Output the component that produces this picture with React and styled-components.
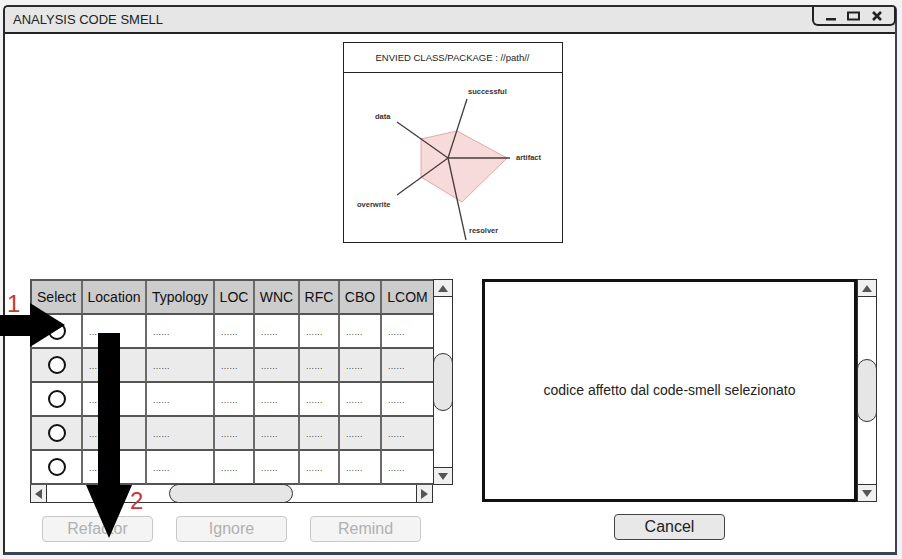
import React from 'react';
import styled, { createGlobalStyle } from 'styled-components';

const GlobalStyle = createGlobalStyle`
    html, body {
        margin: 0;
        padding: 0;
        background: #f3f3f3;
        font-family: "Liberation Sans", Arial, sans-serif;
    }
    * { box-sizing: border-box; }
`;

// 화면 전체
const Page = styled.div`
    position : relative;
    width    : 902px;
    height   : 559px;
    padding  : 5px 5px 4px 3px;
`;

// 창
const Window = styled.div`
    width          : 894px;
    height         : 550px;
    display        : flex;
    flex-direction : column;
    background     : #fff;
    border         : 2px solid #2a2a2a;
    border-right-color  : #3b4352;
    border-bottom-color : #3b4352;
    border-bottom-width : 3px;
    border-radius  : 5px 5px 0 0;
`;

const TitleBar = styled.div`
    height        : 27px;
    display       : flex;
    align-items   : center;
    justify-content: space-between;
    background    : #e6e6e6;
    border-bottom : 2px solid #222;
    border-radius : 4px 4px 0 0;
    padding-left  : 8px;
    padding-bottom: 1px;
    font-size     : 13px;
    color         : #222;
`;

const Controls = styled.div`
    align-self    : flex-start;
    width         : 84px;
    height        : 19px;
    margin-right  : -1px;
    display       : flex;
    align-items   : center;
    justify-content: space-around;
    padding       : 0 6px;
    border        : 2px solid #222;
    border-top    : none;
    border-radius : 0 0 6px 6px;
`;

const Body = styled.div`
    flex           : 1;
    display        : flex;
    flex-direction : column;
    align-items    : center;
    padding-top    : 8px;
`;

// 차트 박스
const ChartBox = styled.div`
    width      : 220px;
    height     : 201px;
    border     : 1px solid #222;
    display    : flex;
    flex-direction: column;
    margin-left: 5px;
`;

const ChartHeader = styled.div`
    height        : 30px;
    border-bottom : 1px solid #222;
    display       : flex;
    align-items   : center;
    justify-content: center;
    font-size     : 9.5px;
    color         : #222;
`;

const Lower = styled.div`
    align-self  : stretch;
    display     : flex;
    gap         : 29px;
    margin-top  : 36px;
    padding-left: 25px;
`;

const LeftCol = styled.div`
    width          : 423px;
    display        : flex;
    flex-direction : column;
`;

const TableFrame = styled.div`
    display : flex;
`;

const Grid = styled.div`
    width     : 403px;
    display   : grid;
    grid-template-columns : 51px 64px 68px 40px 45px 40px 42px 53px;
    grid-template-rows    : 34px repeat(5, 34px);
    border-top  : 2px solid #555;
    border-left : 2px solid #555;
`;

const Cell = styled.div`
    display       : flex;
    align-items   : center;
    justify-content: ${p => (p.$center ? 'center' : 'flex-start')};
    padding-left  : ${p => (p.$center ? '0' : '6px')};
    border-right  : 2px solid #6a6a6a;
    border-bottom : 2px solid #555;
    background    : ${p => (p.$head ? '#cccccc' : p.$alt ? '#ebebeb' : '#fff')};
    font-size     : ${p => (p.$head ? '14px' : '9px')};
    color         : ${p => (p.$head ? '#111' : '#444')};
    letter-spacing: ${p => (p.$head ? '0' : '0.3px')};
`;

const Dots = styled.span`
    margin-top : 2px;
`;

const Radio = styled.span`
    width         : 18px;
    height        : 18px;
    border        : 2px solid #111;
    border-radius : 50%;
    background    : #fff;
`;

// 스크롤바
const VScroll = styled.div`
    width          : 20px;
    height         : ${p => p.$h}px;
    display        : flex;
    flex-direction : column;
    justify-content: space-between;
    border         : 1px solid #333;
    background     : #fff;
`;

const ArrowBtn = styled.div`
    height     : 17px;
    width      : ${p => (p.$w ? p.$w + 'px' : 'auto')};
    display    : flex;
    align-items: center;
    justify-content: center;
    background : #f0f0f0;
    border-${p => p.$side}: 1px solid #333;
`;

const VThumb = styled.div`
    height        : ${p => p.$h}px;
    margin        : 0 -1px;
    background    : #e6e6e6;
    border        : 1px solid #333;
    border-radius : 10px;
`;

const HScroll = styled.div`
    width       : 403px;
    height      : 18px;
    display     : flex;
    align-items : stretch;
    border      : 1px solid #333;
    border-top  : none;
    background  : #fff;
`;

const HTrack = styled.div`
    flex        : 1;
    display     : flex;
    align-items : center;
    padding-left: 122px;
`;

const HThumb = styled.div`
    width         : 124px;
    height        : 19px;
    margin-top    : -1px;
    background    : #e6e6e6;
    border        : 1px solid #333;
    border-radius : 10px;
`;

const ButtonRow = styled.div`
    display     : flex;
    gap         : 23px;
    margin-top  : 13px;
    padding-left: 12px;
`;

const Button = styled.div`
    width          : 111px;
    height         : 26px;
    display        : flex;
    align-items    : center;
    justify-content: center;
    font-size      : 16px;
    border-radius  : 4px;
    border         : 1px solid ${p => (p.$disabled ? '#c8c8c8' : '#444')};
    background     : ${p => (p.$disabled ? '#f4f4f4' : '#e8e8e8')};
    color          : ${p => (p.$disabled ? '#b0b0b0' : '#222')};
`;

const RightCol = styled.div`
    width          : 395px;
    display        : flex;
    flex-direction : column;
`;

const CodeFrame = styled.div`
    display : flex;
`;

const CodeArea = styled.div`
    width          : 375px;
    height         : 223px;
    border         : 3px solid #111;
    display        : flex;
    align-items    : center;
    justify-content: center;
    font-size      : 14px;
    color          : #222;
    padding-bottom : 2px;
`;

const CancelRow = styled.div`
    width          : 375px;
    display        : flex;
    justify-content: center;
    margin-top     : 12px;
`;

// 주석 화살표
const Overlay = styled.svg`
    position       : absolute;
    left           : 0;
    top            : 0;
    pointer-events : none;
`;

const Mark = styled.span`
    position   : absolute;
    left       : ${p => p.$x}px;
    top        : ${p => p.$y}px;
    font-size  : 24px;
    color      : #c8363a;
    line-height: 1;
`;

const heads = ['Select', 'Location', 'Typology', 'LOC', 'WNC', 'RFC', 'CBO', 'LCOM'];
const rows = [0, 1, 2, 3, 4];

const Tri = ({ dir }) => {
    const pts = {
        up: '0,7 5,0 10,7',
        down: '0,0 10,0 5,7',
        left: '7,0 7,10 0,5',
        right: '0,0 0,10 7,5',
    }[dir];
    const vertical = dir === 'up' || dir === 'down';
    return (
        <svg width={vertical ? 10 : 7} height={vertical ? 7 : 10}>
            <polygon points={pts} fill="#555" />
        </svg>
    );
};

const Radar = () => (
    <svg width="218" height="169" viewBox="344 73 218 169">
        <polygon points="457,131 507,158 462,202 421,177 421,139"
                 fill="#f7dada" stroke="#e4a8a8" strokeWidth="1" />
        <g stroke="#4a3a3a" strokeWidth="1.3">
            <line x1="448" y1="158" x2="467" y2="99" />
            <line x1="448" y1="158" x2="397" y2="122" />
            <line x1="448" y1="158" x2="510" y2="158" />
            <line x1="448" y1="158" x2="397" y2="195" />
            <line x1="448" y1="158" x2="466" y2="240" />
        </g>
        <g fontFamily="Liberation Sans, Arial, sans-serif" fontSize="7.5" fontWeight="bold" fill="#333">
            <text x="468" y="94">successful</text>
            <text x="375" y="119">data</text>
            <text x="516" y="160">artifact</text>
            <text x="357" y="207">overwrite</text>
            <text x="469" y="233">resolver</text>
        </g>
    </svg>
);

const App = () => {
    return (
        <Page>
            <GlobalStyle />
            <Window>
                <TitleBar>
                    ANALYSIS CODE SMELL
                    <Controls>
                        <svg width="12" height="10" viewBox="0 0 12 10"><rect x="1" y="7" width="10" height="2.5" fill="#222" /></svg>
                        <svg width="13" height="10" viewBox="0 0 13 10"><rect x="1" y="1.5" width="11" height="7" fill="none" stroke="#222" strokeWidth="2" /></svg>
                        <svg width="12" height="10" viewBox="0 0 12 10"><path d="M2 1 L10 9 M10 1 L2 9" stroke="#222" strokeWidth="2.6" /></svg>
                    </Controls>
                </TitleBar>
                <Body>
                    <ChartBox>
                        <ChartHeader>ENVIED CLASS/PACKAGE : //path//</ChartHeader>
                        <Radar />
                    </ChartBox>
                    <Lower>
                        <LeftCol>
                            <TableFrame>
                                <Grid>
                                    {heads.map(h => <Cell key={h} $head $center>{h}</Cell>)}
                                    {rows.map(r => (
                                        <React.Fragment key={r}>
                                            <Cell $center $alt={r % 2 === 1}><Radio /></Cell>
                                            {heads.slice(1).map(h => (
                                                <Cell key={h} $alt={r % 2 === 1}><Dots>......</Dots></Cell>
                                            ))}
                                        </React.Fragment>
                                    ))}
                                </Grid>
                                <VScroll $h={206}>
                                    <ArrowBtn $side="bottom"><Tri dir="up" /></ArrowBtn>
                                    <VThumb $h={58} />
                                    <ArrowBtn $side="top"><Tri dir="down" /></ArrowBtn>
                                </VScroll>
                            </TableFrame>
                            <HScroll>
                                <ArrowBtn $side="right" $w={16}><Tri dir="left" /></ArrowBtn>
                                <HTrack><HThumb /></HTrack>
                                <ArrowBtn $side="left" $w={16}><Tri dir="right" /></ArrowBtn>
                            </HScroll>
                            <ButtonRow>
                                <Button $disabled>Refactor</Button>
                                <Button $disabled>Ignore</Button>
                                <Button $disabled>Remind</Button>
                            </ButtonRow>
                        </LeftCol>
                        <RightCol>
                            <CodeFrame>
                                <CodeArea>codice affetto dal code-smell selezionato</CodeArea>
                                <VScroll $h={223}>
                                    <ArrowBtn $side="bottom"><Tri dir="up" /></ArrowBtn>
                                    <VThumb $h={63} />
                                    <ArrowBtn $side="top"><Tri dir="down" /></ArrowBtn>
                                </VScroll>
                            </CodeFrame>
                            <CancelRow>
                                <Button>Cancel</Button>
                            </CancelRow>
                        </RightCol>
                    </Lower>
                </Body>
            </Window>

            <Overlay width="902" height="559" viewBox="0 0 902 559">
                <rect x="0" y="315" width="32" height="21" fill="#000" />
                <polygon points="30,303 65,325 30,347" fill="#000" />
                <rect x="98" y="333" width="22" height="154" fill="#000" />
                <polygon points="86,485 132,485 109,538" fill="#000" />
            </Overlay>
            <Mark $x={7} $y={292}>1</Mark>
            <Mark $x={130} $y={489}>2</Mark>
        </Page>
    );
};

export default App;
